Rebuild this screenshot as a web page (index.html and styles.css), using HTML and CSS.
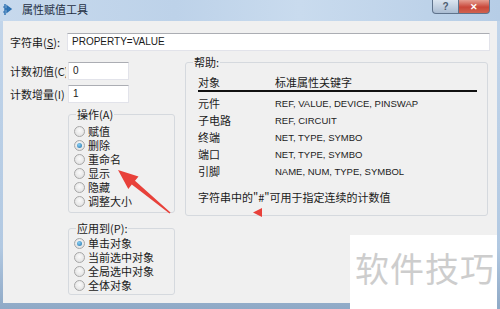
FILE: index.html
```html
<!DOCTYPE html>
<html lang="zh-CN">
<head>
    <meta charset="UTF-8">
    <title>属性赋值工具</title>
    <link rel="stylesheet" href="styles.css">
</head>
<body>
    <div class="window">
        <div class="titlebar">
            <svg class="app-icon" width="10" height="13" viewBox="0 0 10 13">
                <path d="M2 1v11M2 6h5M4 3l4 3-4 3z" stroke="#2a6fb0" stroke-width="1.4" fill="#4a90d0"/>
                <path d="M0 4h2M0 9h2" stroke="#2a6fb0" stroke-width="1"/>
            </svg>
            <span class="title">属性赋值工具</span>
            <div class="caption-buttons">
                <span class="btn-help">?</span>
                <span class="btn-close">✕</span>
            </div>
        </div>

        <div class="client">
            <div class="string-row">
                <label class="string-label">字符串(<u>S</u>):</label>
                <div class="textbox wide">PROPERTY=VALUE</div>
            </div>

            <div class="body">
                <div class="left">
                    <div class="count-row">
                        <label class="count-label">计数初值(C)</label>
                        <div class="textbox small">0</div>
                    </div>
                    <div class="count-row">
                        <label class="count-label">计数增量(I)</label>
                        <div class="textbox small">1</div>
                    </div>

                    <fieldset class="group ops">
                        <legend>操作(A)</legend>
                        <div class="radio"><span class="dot"></span>赋值</div>
                        <div class="radio"><span class="dot checked"></span>删除</div>
                        <div class="radio"><span class="dot"></span>重命名</div>
                        <div class="radio"><span class="dot"></span>显示</div>
                        <div class="radio"><span class="dot"></span>隐藏</div>
                        <div class="radio"><span class="dot"></span>调整大小</div>
                    </fieldset>

                    <fieldset class="group apply">
                        <legend>应用到(P):</legend>
                        <div class="radio"><span class="dot checked"></span>单击对象</div>
                        <div class="radio"><span class="dot"></span>当前选中对象</div>
                        <div class="radio"><span class="dot"></span>全局选中对象</div>
                        <div class="radio"><span class="dot"></span>全体对象</div>
                    </fieldset>
                </div>

                <fieldset class="group help">
                    <legend>帮助:</legend>
                    <div class="help-head">
                        <span class="col-obj">对象</span>
                        <span>标准属性关键字</span>
                    </div>
                    <div class="help-rows">
                        <div class="help-row"><span class="col-obj">元件</span><span class="kw">REF, VALUE, DEVICE, PINSWAP</span></div>
                        <div class="help-row"><span class="col-obj">子电路</span><span class="kw">REF, CIRCUIT</span></div>
                        <div class="help-row"><span class="col-obj">终端</span><span class="kw">NET, TYPE, SYMBO</span></div>
                        <div class="help-row"><span class="col-obj">端口</span><span class="kw">NET, TYPE, SYMBO</span></div>
                        <div class="help-row"><span class="col-obj">引脚</span><span class="kw">NAME, NUM, TYPE, SYMBOL</span></div>
                    </div>
                    <p class="help-note">字符串中的"#"可用于指定连续的计数值</p>
                </fieldset>
            </div>
        </div>

        <!-- annotation arrows drawn over the dialog -->
        <svg class="marks" width="500" height="309" viewBox="0 0 500 309">
            <polygon points="118,170 138.5,176.5 135,180.8 170.5,212.5 169.5,213.5 131.8,184.6 128.3,188.9" fill="#e8413a"/>
            <polygon points="253,212.5 262,208 262,217" fill="#e8413a"/>
        </svg>

        <div class="watermark">软件技巧</div>
    </div>
</body>
</html>
```

FILE: styles.css
```css
body {
    margin: 0;
    padding: 0;
    font-family: "Liberation Sans", "Noto Sans CJK SC", sans-serif;
    font-size: 11px;
    color: #1a1a1a;
}

.window {
    position: relative;
    width: 500px;
    height: 309px;
    overflow: hidden;
    background: linear-gradient(to bottom, #c3d6eb, #b2c9e2 80%, #8fa9c6);
    display: flex;
    flex-direction: column;
}

/* Title bar */
.titlebar {
    height: 21px;
    display: flex;
    align-items: flex-start;
    background: linear-gradient(to right, #c7d9ed, #bdd2e9 35%, #c9dbee 60%, #b6cde6);
}

.app-icon {
    margin: 3px 0 0 3px;
}

.title {
    margin: 3px 0 0 9px;
    font-family: "Noto Sans CJK SC", sans-serif;
    font-size: 11px;
    line-height: 13px;
    color: #1e2e42;
}

.caption-buttons {
    margin-left: auto;
    margin-right: 10px;
    display: flex;
}

.btn-help,
.btn-close {
    height: 13px;
    display: flex;
    align-items: center;
    justify-content: center;
    color: #fff;
    font-size: 10px;
    font-weight: bold;
    border: 1px solid #5f738c;
    border-top: none;
}

.btn-help {
    width: 25px;
    border-radius: 0 0 0 4px;
    background: linear-gradient(to bottom, #dbe5f0, #aabcd2);
    color: #4d5d70;
}

.btn-close {
    width: 30px;
    border-left: none;
    border-radius: 0 0 4px 0;
    background: linear-gradient(to bottom, #e59f93, #c9473a 55%, #d0624f);
    font-size: 9px;
}

/* Client area */
.client {
    margin: 0 3px;
    height: 282px;
    background: #f0f0f0;
    padding: 12px 7px 0;
    box-sizing: border-box;
}

.string-row {
    display: flex;
    align-items: center;
}

.string-label {
    width: 57px;
    font-family: "Noto Sans CJK SC", sans-serif;
}

.textbox {
    height: 18px;
    box-sizing: border-box;
    background: #fff;
    border: 1px solid #e2e3ea;
    border-top-color: #abadb3;
    padding: 0 4px;
    line-height: 16px;
    font-size: 10px;
}

.textbox.wide {
    flex: 1;
}

.textbox.small {
    width: 61px;
}

.body {
    display: flex;
    align-items: flex-start;
    gap: 10px;
    margin-top: 5px;
}

.left {
    width: 165px;
    padding-top: 6px;
}

.count-row {
    display: flex;
    align-items: center;
    margin-bottom: 5px;
}

.count-label {
    width: 56px;
    margin-right: 2px;
    overflow: hidden;
    white-space: nowrap;
    font-family: "Noto Sans CJK SC", sans-serif;
}

/* Group boxes */
.group {
    margin: 0;
    min-width: 0;
    border: 1px solid #d5d9de;
    border-radius: 3px;
}

.group legend {
    padding: 0 1px;
    line-height: 13px;
    font-family: "Noto Sans CJK SC", sans-serif;
}

.ops,
.apply {
    margin-left: 58px;
    width: 107px;
    box-sizing: border-box;
    padding: 3px 0 4px 5px;
}

.ops {
    margin-top: 2px;
}

.apply {
    margin-top: 9px;
    padding-top: 1px;
    padding-bottom: 2px;
}

.ops legend,
.apply legend {
    margin-left: 2px;
}

.radio {
    height: 14px;
    line-height: 14px;
    display: flex;
    align-items: center;
    gap: 3px;
    font-family: "Noto Sans CJK SC", sans-serif;
    white-space: nowrap;
}

.dot {
    width: 11px;
    height: 11px;
    border-radius: 50%;
    border: 1px solid #a7a7a7;
    box-sizing: border-box;
    background: radial-gradient(circle at 50% 40%, #fafafa, #dcdcdc);
    display: flex;
    align-items: center;
    justify-content: center;
}

.dot.checked::after {
    content: "";
    width: 5px;
    height: 5px;
    border-radius: 50%;
    background: radial-gradient(circle at 40% 35%, #8ad0f5, #1f6fa8);
}

/* Help box */
.help {
    width: 303px;
    box-sizing: border-box;
    padding: 6px 10px 10px 12px;
}

.help legend {
    margin-left: -5px;
}

.help-head {
    display: flex;
    line-height: 14px;
    padding-bottom: 1px;
    border-bottom: 2px solid #111;
    font-family: "Noto Sans CJK SC", sans-serif;
}

.col-obj {
    width: 77px;
    font-family: "Noto Sans CJK SC", sans-serif;
}

.help-rows {
    padding-top: 3px;
}

.help-row {
    display: flex;
    align-items: center;
    height: 17px;
    line-height: 17px;
}

.kw {
    font-size: 9.5px;
    color: #222;
}

.help-note {
    margin: 9px 0 0;
    line-height: 16px;
    font-family: "Noto Sans CJK SC", sans-serif;
}

/* Overlays */
.marks {
    position: absolute;
    left: 0;
    top: 0;
    pointer-events: none;
}

.watermark {
    position: absolute;
    left: 350px;
    top: 235px;
    width: 147px;
    height: 74px;
    box-sizing: border-box;
    background: #fff;
    padding: 13px 0 0 5px;
    font-family: "Noto Sans CJK SC", sans-serif;
    font-size: 34px;
    line-height: 40px;
    color: #cdcdcd;
    letter-spacing: 1px;
}
```
